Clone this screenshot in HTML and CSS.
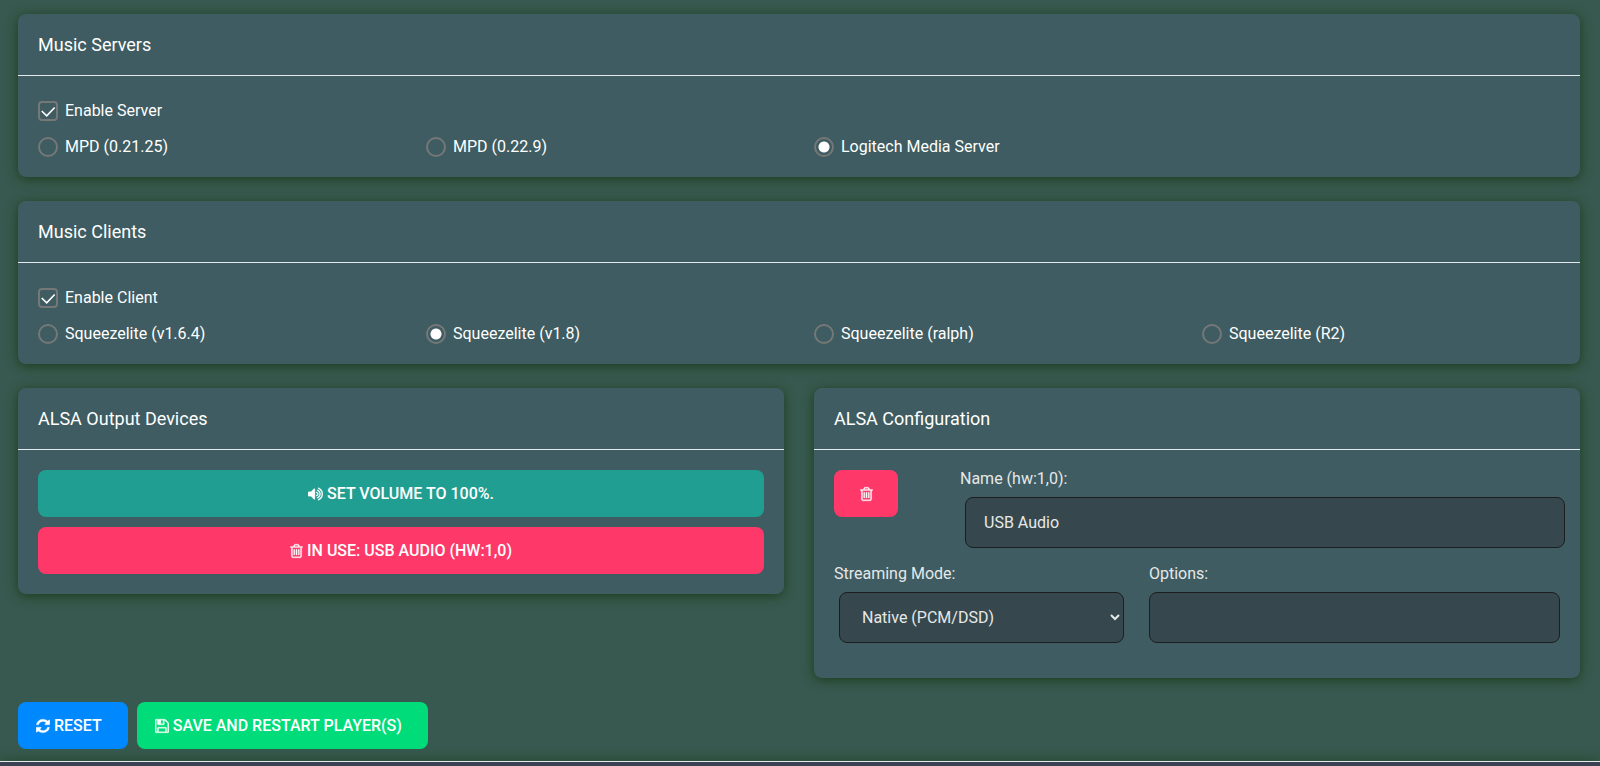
FILE: index.html
```html
<!DOCTYPE html>
<html lang="en">
<head>
  <meta charset="UTF-8" />
  <meta name="viewport" content="width=device-width, initial-scale=1.0"/>
  <title>Player Settings</title>
  <link rel="stylesheet" href="styles.css">
</head>
<body>

  <svg class="sprite" aria-hidden="true">
    <symbol id="trash" viewBox="192 0 1408 1792">
      <path d="M704 736v576q0 14-9 23t-23 9h-64q-14 0-23-9t-9-23v-576q0-14 9-23t23-9h64q14 0 23 9t9 23zm256 0v576q0 14-9 23t-23 9h-64q-14 0-23-9t-9-23v-576q0-14 9-23t23-9h64q14 0 23 9t9 23zm256 0v576q0 14-9 23t-23 9h-64q-14 0-23-9t-9-23v-576q0-14 9-23t23-9h64q14 0 23 9t9 23zm128 724v-948h-896v948q0 22 7 40.5t14.5 27 10.5 8.5h832q3 0 10.5-8.5t14.5-27 7-40.5zm-672-1076h448l-48-117q-7-9-17-11h-317q-10 2-17 11zm928 32v64q0 14-9 23t-23 9h-96v948q0 83-47 143.5t-113 60.5h-832q-66 0-113-58.5t-47-141.5v-952h-96q-14 0-23-9t-9-23v-64q0-14 9-23t23-9h309l70-167q15-37 54-63t79-26h320q40 0 79 26t54 63l70 167h309q14 0 23 9t9 23z"/>
    </symbol>
    <symbol id="volume" viewBox="64 0 1664 1792">
      <path d="M832 352v1088q0 26-19 45t-45 19-45-19l-333-333h-262q-26 0-45-19t-19-45v-384q0-26 19-45t45-19h262l333-333q19-19 45-19t45 19 19 45zm384 544q0 76-42.5 141.5t-112.5 93.5q-10 5-25 5-26 0-45-18.5t-19-45.5q0-21 12-35.5t29-25 34-23 29-36 12-56.5-12-56.5-29-36-34-23-29-25-12-35.5q0-27 19-45.5t45-18.5q15 0 25 5 70 27 112.5 93t42.5 142zm256 0q0 153-85 282.5t-225 188.5q-13 5-25 5-27 0-46-19t-19-45q0-39 39-59 56-29 76-44 74-54 115.5-135.5t41.5-173.5-41.5-173.5-115.5-135.5q-20-15-76-44-39-20-39-59 0-26 19-45t45-19q13 0 26 5 140 59 225 188.5t85 282.5zm256 0q0 230-127 422.5t-338 283.5q-13 5-26 5-26 0-45-19t-19-45q0-36 39-59 7-4 22.5-10.5t22.5-10.5q46-25 82-51 123-91 192-227t69-289-69-289-192-227q-36-26-82-51-7-4-22.5-10.5t-22.5-10.5q-39-23-39-59 0-26 19-45t45-19q13 0 26 5 211 91 338 283.5t127 422.5z"/>
    </symbol>
    <symbol id="refresh" viewBox="128 0 1536 1792">
      <path d="M1639 1056q0 5-1 7-64 268-268 434.5t-478 166.5q-146 0-282.5-55t-243.5-157l-129 129q-19 19-45 19t-45-19-19-45v-448q0-26 19-45t45-19h448q26 0 45 19t19 45-19 45l-137 137q71 66 161 102t187 36q134 0 250-65t186-179q11-17 53-117 8-23 30-23h192q13 0 22.5 9.5t9.5 22.5zm25-800v448q0 26-19 45t-45 19h-448q-26 0-45-19t-19-45 19-45l138-138q-148-137-349-137-134 0-250 65t-186 179q-11 17-53 117-8 23-30 23h-199q-13 0-22.5-9.5t-9.5-22.5v-7q65-268 270-434.5t480-166.5q146 0 284 55.5t245 156.5l130-129q19-19 45-19t45 19 19 45z"/>
    </symbol>
    <symbol id="save" viewBox="128 0 1536 1792">
      <path d="M512 1536h768v-384h-768v384zm896 0h128v-896q0-14-10-38.5t-20-34.5l-281-281q-10-10-34-20t-39-10v416q0 40-28 68t-68 28h-576q-40 0-68-28t-28-68v-416h-128v1280h128v-416q0-40 28-68t68-28h832q40 0 68 28t28 68v416zm-384-928v-320q0-13-9.5-22.5t-22.5-9.5h-192q-13 0-22.5 9.5t-9.5 22.5v320q0 13 9.5 22.5t22.5 9.5h192q13 0 22.5-9.5t9.5-22.5zm640 32v928q0 40-28 68t-68 28h-1344q-40 0-68-28t-28-68v-1344q0-40 28-68t68-28h928q40 0 88 20t76 48l280 280q28 28 48 76t20 88z"/>
    </symbol>
  </svg>

  <form class="settings">
    <section class="card">
      <h2>Music Servers</h2>
      <div class="choices">
        <label class="choice wide"><input type="checkbox" name="server-on" checked> Enable Server</label>
        <label class="choice"><input type="radio" name="server"> MPD (0.21.25)</label>
        <label class="choice"><input type="radio" name="server"> MPD (0.22.9)</label>
        <label class="choice"><input type="radio" name="server" checked> Logitech Media Server</label>
      </div>
    </section>

    <section class="card">
      <h2>Music Clients</h2>
      <div class="choices">
        <label class="choice wide"><input type="checkbox" name="client-on" checked> Enable Client</label>
        <label class="choice"><input type="radio" name="client"> Squeezelite (v1.6.4)</label>
        <label class="choice"><input type="radio" name="client" checked> Squeezelite (v1.8)</label>
        <label class="choice"><input type="radio" name="client"> Squeezelite (ralph)</label>
        <label class="choice"><input type="radio" name="client"> Squeezelite (R2)</label>
      </div>
    </section>

    <div class="columns">
      <section class="card">
        <h2>ALSA Output Devices</h2>
        <div class="devices">
          <button type="button" class="btn teal"><svg class="icon volume"><use href="#volume"/></svg>Set volume to 100%.</button>
          <button type="button" class="btn pink"><svg class="icon trash"><use href="#trash"/></svg>In use: USB Audio (hw:1,0)</button>
        </div>
      </section>

      <section class="card">
        <h2>ALSA Configuration</h2>
        <div class="config">
          <div class="remove">
            <button type="button" class="btn pink" aria-label="Remove device"><svg class="icon trash"><use href="#trash"/></svg></button>
          </div>
          <div class="field name">
            <label for="name">Name (hw:1,0):</label>
            <input type="text" id="name" value="USB Audio">
          </div>
          <div class="field mode">
            <label for="mode">Streaming Mode:</label>
            <select id="mode">
              <option>Native (PCM/DSD)</option>
            </select>
          </div>
          <div class="field options">
            <label for="options">Options:</label>
            <input type="text" id="options">
          </div>
        </div>
      </section>
    </div>

    <div class="actions">
      <button type="reset" class="btn blue"><svg class="icon"><use href="#refresh"/></svg>Reset</button>
      <button type="submit" class="btn green"><svg class="icon"><use href="#save"/></svg>Save and restart player(s)</button>
    </div>
  </form>

  <footer></footer>

</body>
</html>
```
FILE: styles.css
```css
* {
  box-sizing: border-box;
}
body {
  display: flex;
  flex-direction: column;
  min-height: 100vh;
  margin: 0;
  background-color: #38594f;
  color: #fff;
  font-family: Roboto, sans-serif;
  font-size: 16px;
  line-height: 20px;
}
.sprite {
  display: none;
}
.settings {
  display: flex;
  flex-direction: column;
  gap: 24px;
  padding: 14px 20px 12px 18px;
}

/* cards */
.card {
  border-radius: 8px;
  background-color: #3e5c61;
  box-shadow: 0 2px 12px #1c3d1c;
}
h2 {
  margin: 0;
  padding: 21px 20px 20px;
  border-bottom: 1px solid #e4eaea;
  font-size: 18px;
  font-weight: 400;
}
.columns {
  display: grid;
  grid-template-columns: 1fr 1fr;
  align-items: start;
  gap: 30px;
}

/* tick boxes and radios */
.choices {
  display: grid;
  grid-template-columns: repeat(4, 1fr);
  gap: 6px 30px;
  padding: 20px 20px 15px;
}
.choice {
  display: flex;
  align-items: center;
  gap: 7px;
  height: 30px;
}
.wide {
  grid-column: 1 / -1;
}
.choice input {
  appearance: none;
  flex: none;
  width: 20px;
  height: 20px;
  margin: 0;
  border: 2px solid #757877;
  border-radius: 4px;
}
.choice input[type="radio"] {
  border-radius: 50%;
}
.choice input[type="checkbox"]:checked {
  background: url("data:image/svg+xml,%3Csvg xmlns='http://www.w3.org/2000/svg' viewBox='1 1 16 16'%3E%3Cpath d='M2.7 9l5 4.8 8-8.3' fill='none' stroke='white' stroke-width='1.6'/%3E%3C/svg%3E") center / 16px;
}
.choice input[type="radio"]:checked {
  background: radial-gradient(circle, #fff 5px, transparent 6px);
}

/* buttons */
.btn {
  display: flex;
  align-items: center;
  justify-content: center;
  gap: 4px;
  height: 47px;
  padding: 0 18px;
  border: 0;
  border-radius: 8px;
  color: #fff;
  font: inherit;
  font-weight: 500;
  text-transform: uppercase;
  cursor: pointer;
}
.icon {
  width: 14px;
  height: 16px;
  fill: currentColor;
  stroke: currentColor;
  stroke-width: 30;
}
.trash {
  width: 13px;
}
.volume {
  width: 15px;
}
.teal {
  background-color: #209e91;
}
.pink {
  background-color: #ff386a;
}
.blue {
  background-color: #0088ff;
}
.green {
  background-color: #00dc7a;
}
.devices {
  display: flex;
  flex-direction: column;
  gap: 10px;
  padding: 20px;
}
.actions {
  display: flex;
  gap: 9px;
}
.actions .btn {
  padding-right: 26px;
}

/* alsa configuration */
.config {
  display: grid;
  grid-template-columns: repeat(12, 1fr);
  gap: 17px 30px;
  padding: 20px 20px 35px;
}
.remove {
  grid-column: span 2;
}
.remove .btn {
  width: 64px;
}
.name {
  grid-column: span 10;
}
.mode {
  grid-column: span 5;
}
.options {
  grid-column: span 7;
}
.field {
  color: #e6e8e8;
}
.field label {
  display: block;
  margin-bottom: 9px;
  line-height: 18px;
}
.field input, .field select {
  display: block;
  width: 100%;
  height: 51px;
  padding: 0 18px;
  border: 1px solid #1c1e1f;
  border-radius: 8px;
  background-color: #36484d;
  color: inherit;
  font: inherit;
}
.field select {
  padding-right: 2px;
}
.name input, .mode select {
  margin-left: 5px;
}

footer {
  flex: 1;
  border-top: 1px solid #e4eaea;
  background-color: #3a4152;
  box-shadow: 0 0 12px #1c3d1c;
}
```
